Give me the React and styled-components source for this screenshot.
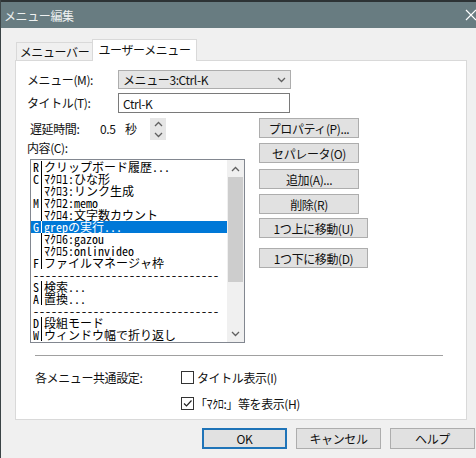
import React from 'react';
import styled, { createGlobalStyle } from 'styled-components';

const Global = createGlobalStyle`
  html, body { margin: 0; padding: 0; background: #f0f0f0; }
  body { font-family: "Noto Sans CJK JP", "Liberation Sans", sans-serif; font-size: 12px; color: #000; }
`;

const UI_FONT = `"Noto Sans CJK JP", "Liberation Sans", sans-serif`;
const LIST_FONT = `"Noto Sans Mono CJK JP", "Liberation Mono", "Noto Sans CJK JP", monospace`;

const Window = styled.div`
  width: 476px;
  height: 458px;
  box-sizing: border-box;
  background: #f0f0f0;
  border-left: 1px solid #3b4446;
  display: flex;
  flex-direction: column;
  overflow: hidden;
  font-family: ${UI_FONT};
  font-size: 12px;
  letter-spacing: -0.4px;
  color: #111;
`;

const TitleBar = styled.div`
  height: 28px;
  box-sizing: border-box;
  border-top: 2px solid #2d3335;
  background: #687c81;
  display: flex;
  align-items: center;
  justify-content: space-between;
  padding: 0 0 0 3px;
  color: #eef1f1;
  font-size: 12px;
`;

const CloseBox = styled.div`
  width: 22px;
  height: 26px;
  display: flex;
  align-items: center;
  justify-content: center;
  margin-right: -6px;
`;

const Body = styled.div`
  padding: 11px 9px 0 14px;
`;

const TabStrip = styled.div`
  height: 21px;
  display: flex;
  align-items: flex-end;
  padding-left: 1px;
`;

const Tab = styled.div`
  position: relative;
  box-sizing: border-box;
  width: ${p => (p.$active ? 105 : 76)}px;
  height: ${p => (p.$active ? 22 : 18)}px;
  margin-bottom: ${p => (p.$active ? -1 : 0)}px;
  z-index: ${p => (p.$active ? 2 : 1)};
  background: ${p => (p.$active ? '#ffffff' : '#f0f0f0')};
  border: 1px solid #d9d9d9;
  border-bottom: none;
  border-right: ${p => (p.$active ? '1px solid #d9d9d9' : 'none')};
  display: flex;
  justify-content: center;
  padding-top: ${p => (p.$active ? 1 : 0)}px;
  line-height: 17px;
  font-size: 12px;
`;

const Panel = styled.div`
  height: 360px;
  box-sizing: border-box;
  background: #ffffff;
  border: 1px solid #d9d9d9;
  padding: 9px 0 0 11px;
`;

const FieldRow = styled.div`
  display: flex;
  align-items: center;
  height: ${p => p.$h}px;
  margin-top: ${p => p.$mt || 0}px;
`;

const FieldLabel = styled.div`
  width: 91px;
  line-height: 14px;
`;

const Combo = styled.div`
  width: 173px;
  height: 19px;
  box-sizing: border-box;
  background: #e5e5e5;
  border: 1px solid #adadad;
  display: flex;
  align-items: center;
  justify-content: space-between;
  padding: 0 4px 0 4px;
`;

const TextBox = styled.div`
  width: 172px;
  height: 20px;
  box-sizing: border-box;
  background: #fff;
  border: 1px solid #7a7a7a;
  display: flex;
  align-items: center;
  padding-left: 4px;
`;

const Main = styled.div`
  display: flex;
  margin-top: 5px;
`;

const LeftCol = styled.div`
  width: 215px;
  margin-left: 3px;
  display: flex;
  flex-direction: column;
`;

const DelayRow = styled.div`
  height: 22px;
  display: flex;
  align-items: center;
`;

const Cell = styled.div`
  width: ${p => p.$w}px;
  line-height: 14px;
`;

const Spinner = styled.div`
  width: 16px;
  height: 22px;
  background: #e6e6e6;
  display: flex;
  flex-direction: column;
  align-items: center;
  justify-content: space-around;
`;

const ContentLabel = styled.div`
  height: 19px;
  margin-left: -3px;
  line-height: 16px;
`;

const ListBox = styled.div`
  height: 184px;
  box-sizing: border-box;
  border: 1px solid #828790;
  display: flex;
  background: #fff;
`;

const Rows = styled.div`
  flex: 1;
  padding-top: 1px;
  overflow: hidden;
  font-family: ${LIST_FONT};
  font-size: 12px;
  line-height: 12px;
  letter-spacing: 0;
`;

const Row = styled.div`
  height: 12px;
  display: flex;
  padding-left: 2px;
  white-space: nowrap;
  background: ${p => (p.$sel ? '#0078d7' : 'transparent')};
  color: ${p => (p.$sel ? '#ffffff' : '#000000')};
`;

const Key = styled.span`
  width: 8px;
  flex: none;
  overflow: hidden;
`;

const ItemText = styled.span`
  border-left: 1px solid currentColor;
  padding-left: 2px;
`;

const Dashes = styled.span`
  width: 186px;
  overflow: hidden;
  display: block;
`;

const ScrollBar = styled.div`
  width: 17px;
  flex: none;
  background: #f0f0f0;
  display: flex;
  flex-direction: column;
`;

const ScrollArrow = styled.div`
  height: 17px;
  display: flex;
  align-items: center;
  justify-content: center;
`;

const Thumb = styled.div`
  height: 105px;
  margin: 0 1px;
  background: #cdcdcd;
`;

const Track = styled.div`
  flex: 1;
`;

const RightCol = styled.div`
  margin-left: 14px;
  display: flex;
  flex-direction: column;
  align-items: flex-start;
`;

const Button = styled.div`
  width: ${p => p.$w}px;
  height: ${p => p.$h || 20}px;
  margin-top: ${p => p.$mt || 0}px;
  box-sizing: border-box;
  background: #e1e1e1;
  border: ${p => (p.$default ? '2px solid #1f74b8' : '1px solid #adadad')};
  display: flex;
  align-items: center;
  justify-content: center;
`;

const Divider = styled.div`
  width: 408px;
  height: 1px;
  background: #a0a0a0;
  margin: 12px 0 0 8px;
`;

const Settings = styled.div`
  display: grid;
  grid-template-columns: 146px auto;
  row-gap: 13px;
  margin: 15px 0 0 8px;
  align-items: center;
`;

const CheckRow = styled.div`
  display: flex;
  align-items: center;
  height: 13px;
  grid-column: ${p => (p.$second ? 2 : 'auto')};
`;

const Box = styled.div`
  width: 13px;
  height: 13px;
  box-sizing: border-box;
  border: 1px solid #333;
  background: #fff;
  margin-right: ${p => p.$gap}px;
  display: flex;
  align-items: center;
  justify-content: center;
`;

const SettingsLabel = styled.div`
  line-height: 13px;
`;

const Footer = styled.div`
  display: flex;
  justify-content: flex-end;
  gap: 9px;
  margin-top: 8px;
  padding-right: 1px;
`;

const Chevron = ({ up, color = '#606060' }) => (
  <svg width="9" height="6" viewBox="0 0 9 6">
    <path
      d={up ? 'M1 5 L4.5 1.5 L8 5' : 'M1 1 L4.5 4.5 L8 1'}
      fill="none"
      stroke={color}
      strokeWidth="1.3"
    />
  </svg>
);

const items = [
  { k: 'R', t: 'クリップボード履歴...' },
  { k: 'C', t: 'ﾏｸﾛ1:ひな形' },
  { k: '', t: 'ﾏｸﾛ3:リンク生成' },
  { k: 'M', t: 'ﾏｸﾛ2:memo' },
  { k: '', t: 'ﾏｸﾛ4:文字数カウント' },
  { k: 'G', t: 'grepの実行...', sel: true },
  { k: '', t: 'ﾏｸﾛ6:gazou' },
  { k: '', t: 'ﾏｸﾛ5:onlinvideo' },
  { k: 'F', t: 'ファイルマネージャ枠' },
  { sep: true },
  { k: 'S', t: '検索...' },
  { k: 'A', t: '置換...' },
  { sep: true },
  { k: 'D', t: '段組モード' },
  { k: 'W', t: 'ウィンドウ幅で折り返し' },
];

export default function App() {
  return (
    <Window>
      <Global />
      <TitleBar>
        <span>メニュー編集</span>
        <CloseBox>
          <svg width="12" height="12" viewBox="0 0 12 12">
            <path d="M1 1 L11 11 M11 1 L1 11" stroke="#ffffff" strokeWidth="1.2" />
          </svg>
        </CloseBox>
      </TitleBar>

      <Body>
        <TabStrip>
          <Tab>メニューバー</Tab>
          <Tab $active>ユーザーメニュー</Tab>
        </TabStrip>
        <Panel>
          <FieldRow $h={19}>
            <FieldLabel>メニュー(M):</FieldLabel>
            <Combo>
              <span>メニュー3:Ctrl-K</span>
              <Chevron />
            </Combo>
          </FieldRow>
          <FieldRow $h={20} $mt={4}>
            <FieldLabel>タイトル(T):</FieldLabel>
            <TextBox>Ctrl-K</TextBox>
          </FieldRow>

          <Main>
            <LeftCol>
              <DelayRow>
                <Cell $w={70}>遅延時間:</Cell>
                <Cell $w={25}>0.5</Cell>
                <Cell $w={25}>秒</Cell>
                <Spinner>
                  <Chevron up />
                  <Chevron />
                </Spinner>
              </DelayRow>
              <ContentLabel>内容(C):</ContentLabel>
              <ListBox>
                <Rows>
                  {items.map((it, i) =>
                    it.sep ? (
                      <Row key={i}>
                        <Dashes>{'-'.repeat(40)}</Dashes>
                      </Row>
                    ) : (
                      <Row key={i} $sel={it.sel}>
                        <Key>{it.k}</Key>
                        <ItemText>{it.t}</ItemText>
                      </Row>
                    )
                  )}
                </Rows>
                <ScrollBar>
                  <ScrollArrow>
                    <Chevron up />
                  </ScrollArrow>
                  <Thumb />
                  <Track />
                  <ScrollArrow>
                    <Chevron />
                  </ScrollArrow>
                </ScrollBar>
              </ListBox>
            </LeftCol>

            <RightCol>
              <Button $w={100}>プロパティ(P)...</Button>
              <Button $w={100} $mt={5}>セパレータ(O)</Button>
              <Button $w={100} $mt={6}>追加(A)...</Button>
              <Button $w={100} $mt={5}>削除(R)</Button>
              <Button $w={109} $mt={4}>1つ上に移動(U)</Button>
              <Button $w={109} $mt={10}>1つ下に移動(D)</Button>
            </RightCol>
          </Main>

          <Divider />

          <Settings>
            <SettingsLabel>各メニュー共通設定:</SettingsLabel>
            <CheckRow>
              <Box $gap={3} />
              <span>タイトル表示(I)</span>
            </CheckRow>
            <CheckRow $second>
              <Box $gap={1}>
                <svg width="11" height="11" viewBox="0 0 11 11">
                  <path d="M2 5.5 L4.5 8 L9.5 2.5" fill="none" stroke="#222" strokeWidth="1.2" />
                </svg>
              </Box>
              <span>「ﾏｸﾛ:」等を表示(H)</span>
            </CheckRow>
          </Settings>
        </Panel>
      </Body>

      <Footer>
        <Button $w={85} $h={21} $default>OK</Button>
        <Button $w={85} $h={21}>キャンセル</Button>
        <Button $w={85} $h={21}>ヘルプ</Button>
      </Footer>
    </Window>
  );
}
